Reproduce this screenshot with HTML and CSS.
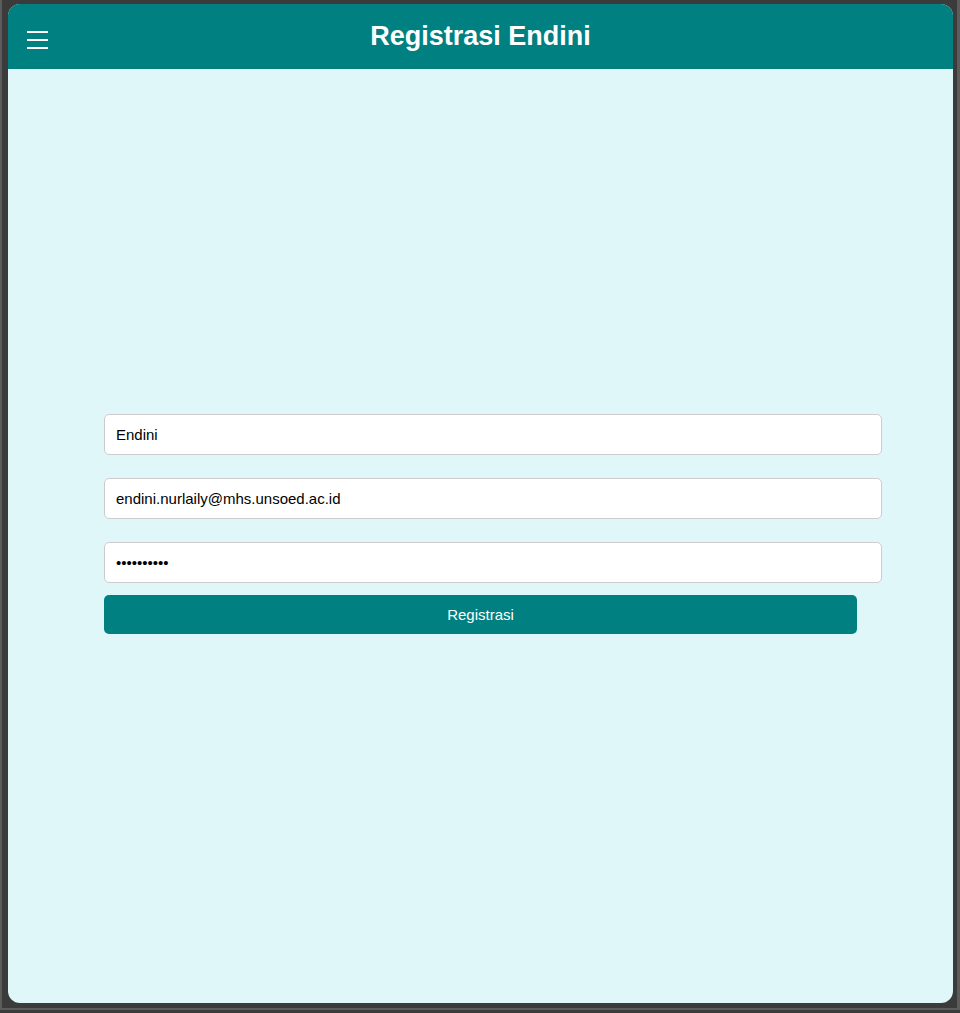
FILE: index.html
```html
<!DOCTYPE html>
<html lang="id">
<head>
<meta charset="utf-8">
<title>Registrasi Endini</title>
<link rel="stylesheet" href="styles.css">
</head>
<body>
<div class="frame">
  <div class="panel">
    <header class="header">
      <button class="menu" aria-label="Menu"><span></span><span></span><span></span></button>
      <h1 class="title">Registrasi Endini</h1>
    </header>
    <main class="content">
      <form class="form">
        <input class="field" type="text" value="Endini">
        <input class="field" type="email" value="endini.nurlaily@mhs.unsoed.ac.id">
        <input class="field" type="password" value="endini1234">
        <button class="submit" type="button">Registrasi</button>
      </form>
    </main>
  </div>
</div>
</body>
</html>
```
FILE: styles.css
```css
html, body {
  margin: 0;
  height: 100%;
  background: #3b3b3b;
}
.frame {
  height: 1010px;
  box-sizing: border-box;
  padding: 4px 4px 5px 6px;
  border-left: 2px solid #5c5c5c;
  border-right: 3px solid #5c5c5c;
  border-bottom: 2px solid #5c5c5c;
  display: flex;
}
.panel {
  flex: 1;
  display: flex;
  flex-direction: column;
  background: #e0f7f9;
  border-radius: 12px;
  overflow: hidden;
  font-family: "Liberation Sans", Arial, sans-serif;
}
.header {
  height: 65px;
  flex: none;
  background: #008080;
  display: flex;
  align-items: center;
  justify-content: center;
  position: relative;
}
.menu {
  position: absolute;
  left: 19px;
  top: 27px;
  width: 21px;
  height: 18px;
  padding: 0;
  border: none;
  background: none;
  display: flex;
  flex-direction: column;
  justify-content: space-between;
}
.menu span {
  display: block;
  height: 2px;
  background: #ffffff;
}
.title {
  margin: 0;
  color: #ffffff;
  font-size: 27px;
  font-weight: bold;
}
.content {
  flex: 1;
  display: flex;
  align-items: center;
  justify-content: center;
  padding-bottom: 24px;
}
.form {
  width: 753px;
  display: flex;
  flex-direction: column;
  align-items: flex-start;
}
.field {
  box-sizing: border-box;
  width: 778px;
  height: 41px;
  margin-bottom: 23px;
  padding: 0 11px;
  border: 1px solid #cccccc;
  border-radius: 5px;
  background: #ffffff;
  font-family: "Liberation Sans", Arial, sans-serif;
  font-size: 15px;
  color: #000000;
  outline: none;
}
.field[type="password"] {
  margin-bottom: 12px;
}
.submit {
  height: 39px;
  width: 753px;
  border: none;
  border-radius: 5px;
  background: #008080;
  color: #ffffff;
  font-family: "Liberation Sans", Arial, sans-serif;
  font-size: 15px;
}
```
